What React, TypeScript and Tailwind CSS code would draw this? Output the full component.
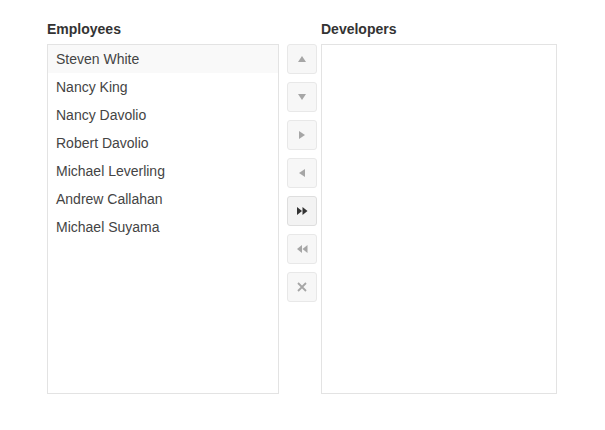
import React from 'react'

const employees = [
  'Steven White',
  'Nancy King',
  'Nancy Davolio',
  'Robert Davolio',
  'Michael Leverling',
  'Andrew Callahan',
  'Michael Suyama',
]

const Tri = ({ dir }: { dir: 'up' | 'down' | 'right' | 'left' }) => {
  const pts = {
    up: '4,1 8,7 0,7',
    down: '0,1 8,1 4,7',
    right: '1,0 7,4 1,8',
    left: '7,0 1,4 7,8',
  }[dir]
  return (
    <svg width="8" height="8" viewBox="0 0 8 8">
      <polygon points={pts} fill="currentColor" />
    </svg>
  )
}

const Double = ({ dir }: { dir: 'right' | 'left' }) => (
  <svg width="11" height="8" viewBox="0 0 11 8">
    {dir === 'right' ? (
      <>
        <polygon points="0,0 5,4 0,8" fill="currentColor" />
        <polygon points="5.5,0 10.5,4 5.5,8" fill="currentColor" />
      </>
    ) : (
      <>
        <polygon points="5,0 0,4 5,8" fill="currentColor" />
        <polygon points="10.5,0 5.5,4 10.5,8" fill="currentColor" />
      </>
    )}
  </svg>
)

const Cross = () => (
  <svg width="10" height="10" viewBox="0 0 10 10">
    <path d="M1 1 L9 9 M9 1 L1 9" stroke="currentColor" strokeWidth="1.8" />
  </svg>
)

function ToolButton({ children, active }: { children: React.ReactNode; active?: boolean }) {
  return (
    <button
      className={
        active
          ? 'w-[30px] h-[30px] flex items-center justify-center rounded-[3px] border border-[#dedede] bg-[#f3f3f3] text-[#333]'
          : 'w-[30px] h-[30px] flex items-center justify-center rounded-[3px] border border-[#e8e8e8] bg-[#f7f7f7] text-[#a6a6a6]'
      }
    >
      {children}
    </button>
  )
}

export default function App() {
  return (
    <div
      className="w-[605px] h-[430px] bg-white text-[#333]"
      style={{ fontFamily: '"Liberation Sans", Arial, sans-serif' }}
    >
      <div className="flex pl-[47px] pt-[21px]">
        {/* Employees */}
        <div className="w-[232px] flex flex-col">
          <div className="text-[14px] font-bold leading-[16px] h-[23px]">Employees</div>
          <div className="h-[350px] border border-[#e3e3e3]">
            {employees.map((name, i) => (
              <div
                key={name}
                className={
                  i === 0
                    ? 'h-[28px] flex items-center pl-[8px] text-[14px] text-[#444] bg-[#f9f9f9]'
                    : 'h-[28px] flex items-center pl-[8px] text-[14px] text-[#444]'
                }
              >
                {name}
              </div>
            ))}
          </div>
        </div>

        {/* toolbar */}
        <div className="flex flex-col gap-[8px] pt-[23px] ml-[8px] mr-[4px]">
          <ToolButton><Tri dir="up" /></ToolButton>
          <ToolButton><Tri dir="down" /></ToolButton>
          <ToolButton><Tri dir="right" /></ToolButton>
          <ToolButton><Tri dir="left" /></ToolButton>
          <ToolButton active><Double dir="right" /></ToolButton>
          <ToolButton><Double dir="left" /></ToolButton>
          <ToolButton><Cross /></ToolButton>
        </div>

        {/* Developers */}
        <div className="w-[236px] flex flex-col">
          <div className="text-[14px] font-bold leading-[16px] h-[23px]">Developers</div>
          <div className="h-[350px] border border-[#e3e3e3]" />
        </div>
      </div>
    </div>
  )
}
